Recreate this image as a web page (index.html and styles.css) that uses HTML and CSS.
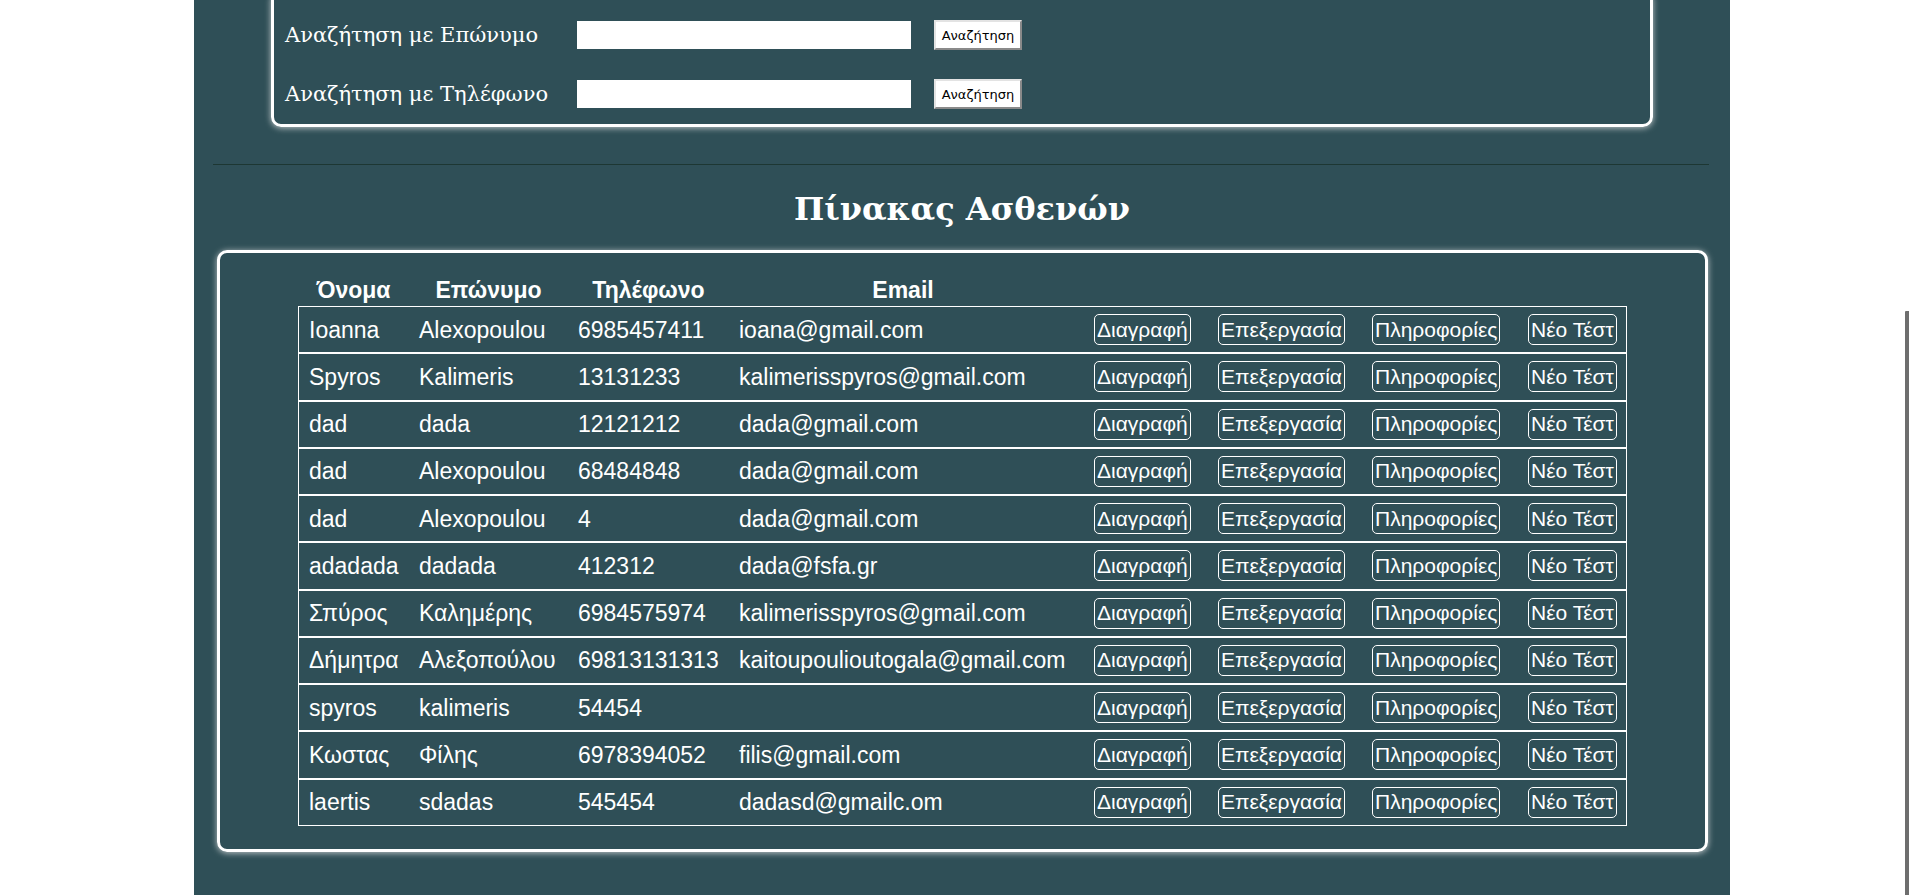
FILE: index.html
```html
<!DOCTYPE html>
<html lang="el">
<head>
<meta charset="utf-8">
<title>Πίνακας Ασθενών</title>
<link rel="stylesheet" href="styles.css">
</head>
<body>
<div class="page">
  <section class="search-panel">
    <form class="search-row">
      <label class="search-label">Αναζήτηση με Επώνυμο</label>
      <input class="search-input" type="text">
      <button class="search-btn" type="button">Αναζήτηση</button>
    </form>
    <form class="search-row">
      <label class="search-label">Αναζήτηση με Τηλέφωνο</label>
      <input class="search-input" type="text">
      <button class="search-btn" type="button">Αναζήτηση</button>
    </form>
  </section>

  <hr class="divider">

  <h2 class="title">Πίνακας Ασθενών</h2>

  <section class="table-panel">
    <table class="patients">
      <colgroup>
        <col class="c-name"><col class="c-surname"><col class="c-phone"><col class="c-email">
        <col class="c-del"><col class="c-edit"><col class="c-info"><col class="c-test">
      </colgroup>
      <thead>
        <tr><th>Όνομα</th><th>Επώνυμο</th><th>Τηλέφωνο</th><th>Email</th><th></th><th></th><th></th><th></th></tr>
      </thead>
      <tbody>
        <tr><td>Ioanna</td><td>Alexopoulou</td><td>6985457411</td><td>ioana@gmail.com</td><td class="act"><button class="row-btn">Διαγραφή</button></td><td class="act"><button class="row-btn">Επεξεργασία</button></td><td class="act"><button class="row-btn">Πληροφορίες</button></td><td class="act"><button class="row-btn">Νέο Τέστ</button></td></tr>
        <tr><td>Spyros</td><td>Kalimeris</td><td>13131233</td><td>kalimerisspyros@gmail.com</td><td class="act"><button class="row-btn">Διαγραφή</button></td><td class="act"><button class="row-btn">Επεξεργασία</button></td><td class="act"><button class="row-btn">Πληροφορίες</button></td><td class="act"><button class="row-btn">Νέο Τέστ</button></td></tr>
        <tr><td>dad</td><td>dada</td><td>12121212</td><td>dada@gmail.com</td><td class="act"><button class="row-btn">Διαγραφή</button></td><td class="act"><button class="row-btn">Επεξεργασία</button></td><td class="act"><button class="row-btn">Πληροφορίες</button></td><td class="act"><button class="row-btn">Νέο Τέστ</button></td></tr>
        <tr><td>dad</td><td>Alexopoulou</td><td>68484848</td><td>dada@gmail.com</td><td class="act"><button class="row-btn">Διαγραφή</button></td><td class="act"><button class="row-btn">Επεξεργασία</button></td><td class="act"><button class="row-btn">Πληροφορίες</button></td><td class="act"><button class="row-btn">Νέο Τέστ</button></td></tr>
        <tr><td>dad</td><td>Alexopoulou</td><td>4</td><td>dada@gmail.com</td><td class="act"><button class="row-btn">Διαγραφή</button></td><td class="act"><button class="row-btn">Επεξεργασία</button></td><td class="act"><button class="row-btn">Πληροφορίες</button></td><td class="act"><button class="row-btn">Νέο Τέστ</button></td></tr>
        <tr><td>adadada</td><td>dadada</td><td>412312</td><td>dada@fsfa.gr</td><td class="act"><button class="row-btn">Διαγραφή</button></td><td class="act"><button class="row-btn">Επεξεργασία</button></td><td class="act"><button class="row-btn">Πληροφορίες</button></td><td class="act"><button class="row-btn">Νέο Τέστ</button></td></tr>
        <tr><td>Σπύρος</td><td>Καλημέρης</td><td>6984575974</td><td>kalimerisspyros@gmail.com</td><td class="act"><button class="row-btn">Διαγραφή</button></td><td class="act"><button class="row-btn">Επεξεργασία</button></td><td class="act"><button class="row-btn">Πληροφορίες</button></td><td class="act"><button class="row-btn">Νέο Τέστ</button></td></tr>
        <tr><td>Δήμητρα</td><td>Αλεξοπούλου</td><td>69813131313</td><td>kaitoupoulioutogala@gmail.com</td><td class="act"><button class="row-btn">Διαγραφή</button></td><td class="act"><button class="row-btn">Επεξεργασία</button></td><td class="act"><button class="row-btn">Πληροφορίες</button></td><td class="act"><button class="row-btn">Νέο Τέστ</button></td></tr>
        <tr><td>spyros</td><td>kalimeris</td><td>54454</td><td></td><td class="act"><button class="row-btn">Διαγραφή</button></td><td class="act"><button class="row-btn">Επεξεργασία</button></td><td class="act"><button class="row-btn">Πληροφορίες</button></td><td class="act"><button class="row-btn">Νέο Τέστ</button></td></tr>
        <tr><td>Κωστας</td><td>Φίλης</td><td>6978394052</td><td>filis@gmail.com</td><td class="act"><button class="row-btn">Διαγραφή</button></td><td class="act"><button class="row-btn">Επεξεργασία</button></td><td class="act"><button class="row-btn">Πληροφορίες</button></td><td class="act"><button class="row-btn">Νέο Τέστ</button></td></tr>
        <tr><td>laertis</td><td>sdadas</td><td>545454</td><td>dadasd@gmailc.om</td><td class="act"><button class="row-btn">Διαγραφή</button></td><td class="act"><button class="row-btn">Επεξεργασία</button></td><td class="act"><button class="row-btn">Πληροφορίες</button></td><td class="act"><button class="row-btn">Νέο Τέστ</button></td></tr>
      </tbody>
    </table>
  </section>
</div>
<div class="scroll-thumb"></div>
</body>
</html>
```

FILE: styles.css
```css
html, body {
  margin: 0;
  padding: 0;
  background: #ffffff;
  overflow: hidden;
}

body {
  font-family: "Liberation Sans", Arial, sans-serif;
  color: #ffffff;
}

.page {
  display: flow-root;
  width: 1536px;
  min-height: 940px;
  margin-left: 194px;
  background: #2f4f57;
}

/* ---------- search panel ---------- */
.search-panel {
  margin: -10px 77px 0;
  padding: 27px 11px 15px;
  border: 3px solid #ffffff;
  border-radius: 10px;
  box-shadow: 0 1px 6px rgba(230, 230, 230, 0.8);
  display: flex;
  flex-direction: column;
  gap: 29px;
}

.search-row {
  display: grid;
  grid-template-columns: 269px 334px 88px;
  column-gap: 23px;
  align-items: center;
  margin: 0;
}

.search-label {
  font-family: "DejaVu Serif", "Liberation Serif", serif;
  font-size: 21px;
  color: #ffffff;
  white-space: nowrap;
}

.search-input {
  box-sizing: border-box;
  height: 28px;
  width: 334px;
  margin: 0;
  border: none;
  background: #ffffff;
}

.search-btn {
  box-sizing: border-box;
  height: 30px;
  width: 88px;
  margin: 0;
  padding: 0 4px;
  font-family: "DejaVu Sans", sans-serif;
  font-size: 13px;
  color: #000000;
  background: #ffffff;
  border: 2px solid;
  border-color: #e3e3e3 #8a8a8a #8a8a8a #e3e3e3;
}

/* ---------- divider & title ---------- */
.divider {
  margin: 37px 21px 0 19px;
  height: 0;
  border: none;
  border-top: 1px solid #1d3733;
}

.title {
  margin: 26px 0 22px;
  text-align: center;
  font-family: "DejaVu Serif", "Liberation Serif", serif;
  font-weight: bold;
  font-size: 32px;
  line-height: 37px;
  color: #ffffff;
}

/* ---------- table panel ---------- */
.table-panel {
  margin: 0 22px 45px 23px;
  padding: 22px 0 23px;
  border: 3px solid #ffffff;
  border-radius: 10px;
  box-shadow: 0 1px 6px rgba(230, 230, 230, 0.8);
}

.patients {
  width: 1329px;
  margin: 0 auto;
  table-layout: fixed;
  border-collapse: separate;
  border-spacing: 0;
  font-size: 23px;
  color: #ffffff;
}

.c-name { width: 111px; }
.c-surname { width: 159px; }
.c-phone { width: 161px; }
.c-email { width: 348px; }
.c-del { width: 124px; }
.c-edit { width: 154px; }
.c-info { width: 156px; }
.c-test { width: 116px; }

.patients th {
  padding: 2px 0;
  line-height: 27px;
  font-weight: bold;
  text-align: center;
  white-space: nowrap;
}

.patients td {
  height: 45.25px;
  padding: 0 10px;
  border-top: 1px solid #ffffff;
  border-bottom: 1px solid #ffffff;
  white-space: nowrap;
  vertical-align: middle;
  line-height: 26px;
}

.patients td:first-child { border-left: 1px solid #ffffff; }
.patients td:last-child { border-right: 1px solid #ffffff; }

.patients td.act {
  padding: 0 0 0 17px;
}

.row-btn {
  box-sizing: border-box;
  height: 31px;
  margin: 0;
  padding: 0 2px;
  font-family: "Liberation Sans", Arial, sans-serif;
  font-size: 21px;
  color: #ffffff;
  background: transparent;
  border: 1px solid #ffffff;
  border-radius: 5px;
  white-space: nowrap;
}

/* overlay scrollbar thumb */
.scroll-thumb {
  position: fixed;
  right: 0;
  top: 311px;
  bottom: 0;
  width: 4px;
  background: #6e6e6e;
  border-top-left-radius: 1px;
}
```
